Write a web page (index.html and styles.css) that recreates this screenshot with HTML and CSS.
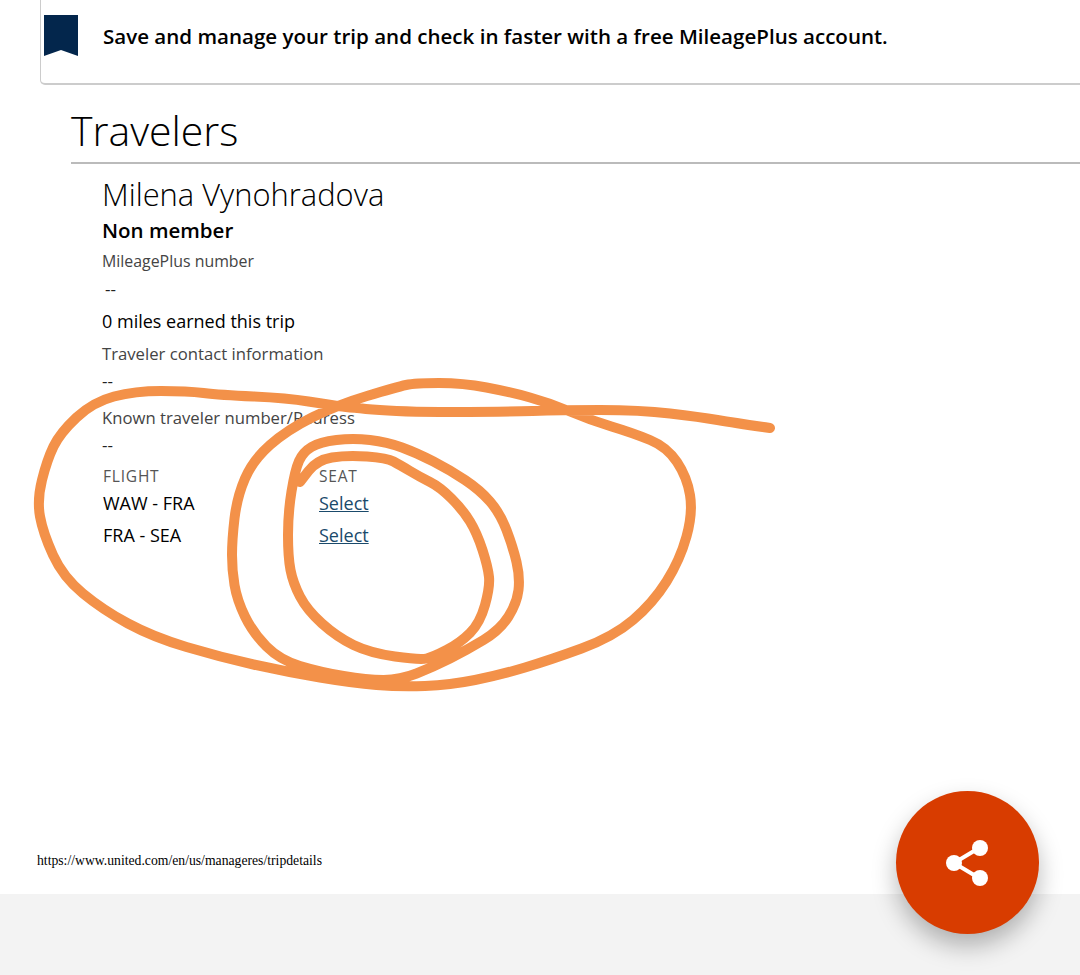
FILE: index.html
```html
<!DOCTYPE html>
<html lang="en">
<head>
  <meta charset="UTF-8">
  <meta name="viewport" content="width=device-width, initial-scale=1.0">
  <title>Trip details</title>
  <link rel="stylesheet" href="styles.css">
</head>
<body>

<div class="page">
  <div class="signup-banner">
    <svg class="bookmark" width="35" height="41" viewBox="0 0 35 41">
      <path d="M0 0H34V41L17 35L0 41Z" fill="#03264c"/>
    </svg>
    <p>Save and manage your trip and check in faster with a free MileagePlus account.</p>
  </div>

  <div class="travelers">
    <h2>Travelers</h2>
    <div class="traveler">
      <h3>Milena Vynohradova</h3>
      <div class="member-status">Non member</div>
      <div class="label label-small">MileagePlus number</div>
      <div class="value value-indent">--</div>
      <div class="miles">0 miles earned this trip</div>
      <div class="label label-first">Traveler contact information</div>
      <div class="value">--</div>
      <div class="label">Known traveler number/Redress</div>
      <div class="value">--</div>

      <div class="seat-table">
        <div class="col-head">FLIGHT</div>
        <div class="col-head">SEAT</div>
        <div class="cell">WAW - FRA</div>
        <div class="cell"><a href="#">Select</a></div>
        <div class="cell">FRA - SEA</div>
        <div class="cell"><a href="#">Select</a></div>
      </div>
    </div>
  </div>

  <div class="page-url">https://www.united.com/en/us/manageres/tripdetails</div>
  <div class="footer-bar"></div>

  <!-- hand drawn circles on top of the screenshot -->
  <svg class="scribble" width="1080" height="975" viewBox="0 0 1080 975">
    <path id="scribbleLine" fill="none" stroke="#f39149" stroke-width="10" stroke-linecap="round" stroke-linejoin="round"/>
  </svg>

  <button class="share-btn">
    <svg width="46" height="48" viewBox="0 0 46 48">
      <path d="M9 24L34 9M9 24L34 39" stroke="#fff" stroke-width="4" fill="none"/>
      <circle cx="9" cy="24" r="8" fill="#fff"/>
      <circle cx="35" cy="9" r="8" fill="#fff"/>
      <circle cx="35" cy="39" r="8" fill="#fff"/>
    </svg>
  </button>
</div>

<script>
  // pen stroke points, smoothed with quadratic curves through the midpoints
  var pts = [770,428, 735,423, 700,417, 640,410, 560,410, 505,412, 400,412, 345,407, 330,405, 287,398, 220,395, 187,391, 135,391, 93,402, 60,433, 47,460, 37,500, 43,533, 63,577, 103,610, 153,637, 220,657, 287,672, 353,683, 400,687, 450,685, 500,675, 550,660, 613,637, 653,603, 680,560, 693,513, 687,477, 667,447, 633,433, 590,420, 550,403, 510,392, 463,383, 415,383, 397,387, 337,405, 287,430, 253,460, 237,497, 232,540, 232,570, 237,600, 253,633, 280,660, 320,672, 367,680, 400,680, 433,667, 467,650, 500,630, 517,603, 520,577, 513,547, 500,513, 480,490, 450,470, 417,453, 387,442, 353,438, 320,442, 303,452, 295,470, 288,513, 288,557, 293,583, 307,610, 337,637, 370,653, 420,660, 433,657, 460,643, 480,623, 490,587, 488,567, 477,533, 463,510, 440,487, 420,477, 400,465, 387,458, 347,455, 317,460, 300,482];
  var d = "M" + pts[0] + " " + pts[1];
  for (var i = 2; i < pts.length - 2; i += 2) {
    var midX = (pts[i] + pts[i + 2]) / 2;
    var midY = (pts[i + 1] + pts[i + 3]) / 2;
    d += " Q" + pts[i] + " " + pts[i + 1] + " " + midX + " " + midY;
  }
  d += " L" + pts[pts.length - 2] + " " + pts[pts.length - 1];
  document.getElementById("scribbleLine").setAttribute("d", d);
</script>

</body>
</html>
```

FILE: styles.css
```css
body {
  font-family: "Open Sans", Arial, sans-serif;
  margin: 0;
  padding: 0;
  background-color: #fff;
  color: #000;
}

.page {
  position: relative;
  width: 1080px;
  height: 975px;
  overflow: hidden;
}

.signup-banner {
  display: flex;
  align-items: flex-start;
  height: 85px;
  margin-left: 40px;
  padding-left: 3px;
  border-left: 1px solid #ccc;
  border-bottom: 2px solid #ccc;
  border-bottom-left-radius: 5px;
  box-sizing: border-box;
}

.bookmark {
  margin-top: 15px;
  flex-shrink: 0;
}

.signup-banner p {
  margin: 20px 0 0 24px;
  font-size: 20.55px;
  line-height: 32px;
  font-weight: 600;
  white-space: nowrap;
}

.travelers {
  margin-left: 71px;
}

.travelers h2 {
  margin: 0;
  padding-top: 15px;
  height: 62px;
  font-size: 41px;
  line-height: 60px;
  font-weight: 300;
  border-bottom: 2px solid #bbb;
}

.traveler {
  padding-left: 31px;
  padding-top: 10px;
}

.traveler h3 {
  margin: 0;
  font-size: 30.9px;
  line-height: 40px;
  font-weight: 300;
}

.member-status {
  margin-top: 1px;
  font-size: 20.5px;
  line-height: 30px;
  font-weight: 600;
}

.label {
  margin-top: 10px;
  font-size: 16.7px;
  line-height: 28px;
  color: #444;
}

.label-small {
  margin-top: 2px;
  font-size: 15.9px;
}

.label-first {
  margin-top: 3px;
}

.value {
  font-size: 17px;
  line-height: 26px;
  color: #222;
}

.value-indent {
  margin-top: 1px;
  padding-left: 3px;
}

.miles {
  margin-top: 3px;
  font-size: 18px;
  line-height: 32px;
}

.seat-table {
  display: grid;
  grid-template-columns: 216px 1fr;
  padding-left: 1px;
  padding-top: 7px;
}

.col-head {
  font-size: 15.5px;
  line-height: 22px;
  letter-spacing: 0.8px;
  color: #555;
}

.cell {
  font-size: 18px;
  line-height: 32px;
}

.cell a {
  color: #1a4a6b;
}

.page-url {
  position: absolute;
  left: 37px;
  top: 853px;
  font-family: "Liberation Serif", serif;
  font-size: 13.7px;
  line-height: 16px;
}

.footer-bar {
  position: absolute;
  left: 0;
  right: 0;
  top: 894px;
  bottom: 0;
  background-color: #f3f3f3;
}

.scribble {
  position: absolute;
  left: 0;
  top: 0;
}

.share-btn {
  position: absolute;
  left: 896px;
  top: 791px;
  width: 143px;
  height: 143px;
  display: flex;
  align-items: center;
  justify-content: center;
  padding: 0;
  border: 0;
  border-radius: 50%;
  background-color: #d83c00;
  box-shadow: 0 12px 24px rgba(0, 0, 0, 0.28);
}
```
